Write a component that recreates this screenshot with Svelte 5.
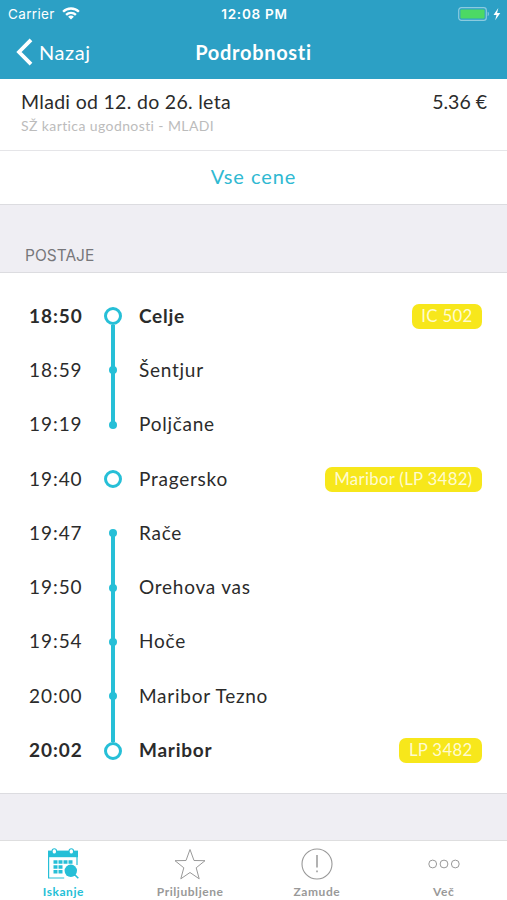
<script lang="ts">
	type Stop = {
		time: string;
		name: string;
		terminal?: boolean;
		ring?: boolean;
		up?: boolean;
		down?: boolean;
		train?: string;
	};

	const stops: Stop[] = [
		{ time: '18:50', name: 'Celje', terminal: true, ring: true, down: true, train: 'IC 502' },
		{ time: '18:59', name: 'Šentjur', up: true, down: true },
		{ time: '19:19', name: 'Poljčane', up: true },
		{ time: '19:40', name: 'Pragersko', ring: true, train: 'Maribor (LP 3482)' },
		{ time: '19:47', name: 'Rače', down: true },
		{ time: '19:50', name: 'Orehova vas', up: true, down: true },
		{ time: '19:54', name: 'Hoče', up: true, down: true },
		{ time: '20:00', name: 'Maribor Tezno', up: true, down: true },
		{ time: '20:02', name: 'Maribor', terminal: true, ring: true, up: true, train: 'LP 3482' }
	];

	const tabs = [
		{ id: 'search', label: 'Iskanje' },
		{ id: 'favorites', label: 'Priljubljene' },
		{ id: 'delays', label: 'Zamude' },
		{ id: 'more', label: 'Več' }
	];

	let active = $state('search');
</script>

<div class="screen">
	<header>
		<div class="status">
			<div class="carrier">
				<span>Carrier</span>
				<svg width="18" height="13" viewBox="0 0 18 13" fill="none" stroke="#fff" stroke-width="2.3">
					<path d="M1.1 4.8C5.3.4 12.7.4 16.9 4.8" />
					<path d="M4.1 7.9c2.7-2.8 7.1-2.8 9.8 0" />
					<path d="M9 12.6 6.1 9.7c1.6-1.6 4.2-1.6 5.8 0z" fill="#fff" stroke="none" />
				</svg>
			</div>
			<span class="clock">12:08 PM</span>
			<div class="power">
				<svg width="43" height="14" viewBox="0 0 43 14">
					<rect x=".7" y=".7" width="27.6" height="12.6" rx="2.6" fill="none" stroke="#8bcbdf" stroke-width="1.2" />
					<rect x="2.4" y="2.4" width="24.2" height="9.2" rx="1" fill="#4cd964" />
					<path d="M29.7 4.8c1.6.6 1.6 3.8 0 4.4z" fill="#8bcbdf" />
					<path d="M40.3.9 35.5 8h3l-1.3 5.3L42.3 6h-3.2z" fill="#fff" />
				</svg>
			</div>
		</div>
		<nav>
			<button class="back">
				<svg width="17" height="28" viewBox="0 0 17 28" fill="none" stroke="#fff" stroke-width="3.8">
					<path d="M15 1.8 3 14l12 12.2" />
				</svg>
				<span>Nazaj</span>
			</button>
			<h1>Podrobnosti</h1>
			<span></span>
		</nav>
	</header>

	<main>
		<section class="price">
			<div class="price-line">
				<span class="fare">Mladi od 12. do 26. leta</span>
				<span class="amount">5.36 €</span>
			</div>
			<div class="card-note">SŽ kartica ugodnosti - MLADI</div>
		</section>
		<button class="all-prices">Vse cene</button>

		<h2>POSTAJE</h2>
		<ul>
			{#each stops as stop (stop.time)}
				<li class:terminal={stop.terminal}>
					<span class="time">{stop.time}</span>
					<div class="track">
						<i class="line" class:on={stop.up}></i>
						<i class={stop.ring ? 'ring' : 'dot'}></i>
						<i class="line" class:on={stop.down}></i>
					</div>
					<span class="name">{stop.name}</span>
					{#if stop.train}
						<span class="train">{stop.train}</span>
					{/if}
				</li>
			{/each}
		</ul>
	</main>

	<footer>
		{#each tabs as tab (tab.id)}
			<button class="tab" class:active={active === tab.id} onclick={() => (active = tab.id)}>
				<svg width="32" height="32" viewBox="0 0 32 32" fill="none" stroke="currentColor">
					{#if tab.id === 'search'}
						<path d="M1.6 3v27h15.6M30 3v14" stroke-width="1.2" />
						<path d="M1 2.6h30v6.6H1z" fill="currentColor" stroke="none" />
						<rect x="5.1" y=".7" width="4.4" height="5.4" rx="2.2" fill="#fff" stroke-width="1.1" />
						<rect x="22.1" y=".7" width="4.4" height="5.4" rx="2.2" fill="#fff" stroke-width="1.1" />
						<path
							d="M6.5 12.3h4v3.5h-4zM11.5 12.3h4v3.5h-4zM16.5 12.3h4v3.5h-4zM21.5 12.3h4v3.5h-4zM6.5 17.2h4v3.5h-4zM11.5 17.2h4v3.5h-4zM6.5 22h4v3.5h-4zM11.5 22h4v3.5h-4z"
							fill="currentColor"
							stroke="none"
						/>
						<circle cx="23.8" cy="22.8" r="6.2" fill="currentColor" stroke="none" />
						<path d="m27.5 26.5 3.8 3.8" stroke-width="1.6" />
					{:else if tab.id === 'favorites'}
						<path d="m16 1.5 4 11 11 .2-8.8 7.1 3 11L16 24.5l-9.2 6.3 3-11L1 12.7l11-.2z" />
					{:else if tab.id === 'delays'}
						<circle cx="16" cy="16" r="15" stroke-width="1.1" />
						<path d="M16 7v12.5M16 22.6v1.6" stroke-width="1.5" />
					{:else}
						<circle cx="4.7" cy="16" r="3.9" />
						<circle cx="16" cy="16" r="3.9" />
						<circle cx="27.3" cy="16" r="3.9" />
					{/if}
				</svg>
				<span>{tab.label}</span>
			</button>
		{/each}
	</footer>
</div>

<style>
	:global(body) {
		margin: 0;
		background: #efeef3;
	}

	.screen {
		display: flex;
		flex-direction: column;
		height: 900px;
		font-family: Lato, sans-serif;
		color: #2b2b2b;
		white-space: nowrap;
	}

	button {
		border: 0;
		padding: 0;
		background: none;
		font: inherit;
		color: inherit;
	}

	header {
		height: 79px;
		box-sizing: border-box;
		background: #2ca0c5;
		color: #fff;
	}

	.status,
	nav {
		display: grid;
		grid-template-columns: 1fr auto 1fr;
		align-items: center;
	}

	.status {
		height: 27px;
		padding: 0 6px 0 8px;
		font-family: Inter, sans-serif;
		font-size: 13.5px;
	}

	.carrier {
		display: flex;
		align-items: center;
		gap: 7px;
		letter-spacing: 0.35px;
	}

	.clock {
		font-weight: 600;
		letter-spacing: 0.75px;
	}

	.power {
		display: flex;
		justify-content: flex-end;
	}

	nav {
		height: 50px;
		padding: 0 16px;
	}

	.back {
		display: flex;
		align-items: center;
		gap: 6px;
		font-size: 20px;
		letter-spacing: 0.6px;
	}

	h1 {
		margin: 0;
		font-size: 20px;
		font-weight: 700;
		letter-spacing: 0.7px;
	}

	.price {
		box-sizing: border-box;
		height: 72px;
		padding: 11px 20px 0 21px;
		background: #fff;
		border-bottom: 1px solid #e5e5e8;
	}

	.price-line {
		display: flex;
		justify-content: space-between;
		font-size: 19.5px;
		line-height: 24px;
	}

	.fare {
		letter-spacing: 0.3px;
	}

	.card-note {
		margin-top: 3px;
		font-size: 14px;
		line-height: 17px;
		letter-spacing: 0.4px;
		color: #bcbcbc;
	}

	.all-prices {
		display: block;
		box-sizing: border-box;
		width: 100%;
		height: 54px;
		padding-bottom: 3px;
		background: #fff;
		border-bottom: 1px solid #dcdce0;
		font-size: 20px;
		letter-spacing: 0.95px;
		color: #2fb9d2;
	}

	h2 {
		box-sizing: border-box;
		height: 68px;
		margin: 0;
		padding: 41px 0 0 25px;
		border-bottom: 1px solid #dcdce0;
		font-family: Inter, sans-serif;
		font-size: 15.5px;
		font-weight: 400;
		line-height: 19px;
		color: #77777b;
	}

	ul {
		box-sizing: border-box;
		height: 521px;
		margin: 0;
		padding: 16px 25px 16px 29px;
		list-style: none;
		background: #fff;
		border-bottom: 1px solid #dcdce0;
	}

	li {
		display: flex;
		align-items: center;
		height: 54.3px;
		font-size: 19px;
	}

	.time,
	.name {
		padding-bottom: 2px;
	}

	.time {
		width: 74px;
		letter-spacing: 0.95px;
	}

	.terminal .time,
	.terminal .name {
		font-weight: 700;
	}

	.track {
		display: flex;
		flex-direction: column;
		align-items: center;
		width: 20px;
		height: 100%;
	}

	.line {
		flex: 1;
		width: 4px;
	}

	.line.on {
		background: #26bfd7;
	}

	.dot {
		width: 8px;
		height: 8px;
		margin: -1px 0;
		border-radius: 50%;
		background: #26bfd7;
	}

	.ring {
		box-sizing: border-box;
		width: 18px;
		height: 18px;
		border: 3.5px solid #26bfd7;
		border-radius: 50%;
	}

	.name {
		flex: 1;
		margin-left: 16px;
		letter-spacing: 0.75px;
	}

	.train {
		height: 25px;
		padding: 0 9.5px;
		border-radius: 7px;
		background: #f7e71b;
		font-size: 16.8px;
		line-height: 24px;
		letter-spacing: 0.3px;
		color: #fffbd0;
	}

	footer {
		display: grid;
		grid-template-columns: repeat(4, 1fr);
		box-sizing: border-box;
		height: 60px;
		margin-top: auto;
		background: #fff;
		border-top: 1px solid #dededf;
	}

	.tab {
		display: flex;
		flex-direction: column;
		align-items: center;
		padding-top: 7px;
		font-size: 12px;
		font-weight: 700;
		line-height: 14px;
		color: #999;
	}

	.tab span {
		margin-top: 5px;
		letter-spacing: 0.55px;
	}

	.tab.active {
		color: #26bfd7;
	}
</style>
